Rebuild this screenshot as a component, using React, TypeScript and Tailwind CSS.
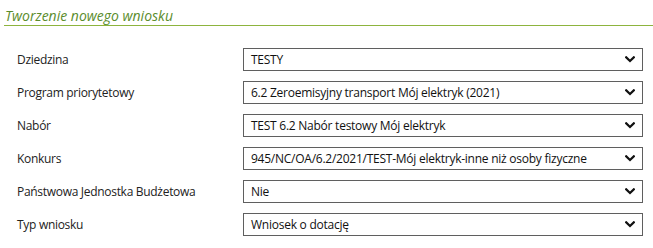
import React from "react";

const rows: [string, string][] = [
  ["Dziedzina", "TESTY"],
  ["Program priorytetowy", "6.2 Zeroemisyjny transport Mój elektryk (2021)"],
  ["Nabór", "TEST 6.2 Nabór testowy Mój elektryk"],
  ["Konkurs", "945/NC/OA/6.2/2021/TEST-Mój elektryk-inne niż osoby fizyczne"],
  ["Państwowa Jednostka Budżetowa", "Nie"],
  ["Typ wniosku", "Wniosek o dotację"],
];

function Chevron() {
  return (
    <svg width="10" height="7" viewBox="0 0 10 7" className="shrink-0">
      <path d="M1.2 1.3 L5 5 L8.8 1.3" fill="none" stroke="#111" strokeWidth="2.2" strokeLinecap="square" />
    </svg>
  );
}

export default function App() {
  return (
    <div className="w-[653px] h-[248px] bg-white overflow-hidden" style={{ fontFamily: '"Open Sans", "Noto Sans", sans-serif' }}>
      <div className="pl-[4px] pt-[6px]">
        <div className="border-b border-[#8db43e] h-[20px] leading-[19px] pl-[1px] text-[14px] italic text-[#5a8c2c]">
          Tworzenie nowego wniosku
        </div>
      </div>
      <div className="flex flex-col gap-[10px] pt-[22px] pl-[17px] pr-[10px]">
        {rows.map(([label, value]) => (
          <div key={label} className="flex items-center h-[23px]">
            <div className="w-[226px] text-[12px] tracking-[-0.3px] text-[#222] leading-none">{label}</div>
            <div className="w-[400px] h-[23px] border border-[#5f5f5f] flex items-center justify-between pl-[7px] pr-[7px] text-[12px] tracking-[-0.25px] text-[#111]">
              <span className="whitespace-nowrap">{value}</span>
              <Chevron />
            </div>
          </div>
        ))}
      </div>
    </div>
  );
}
